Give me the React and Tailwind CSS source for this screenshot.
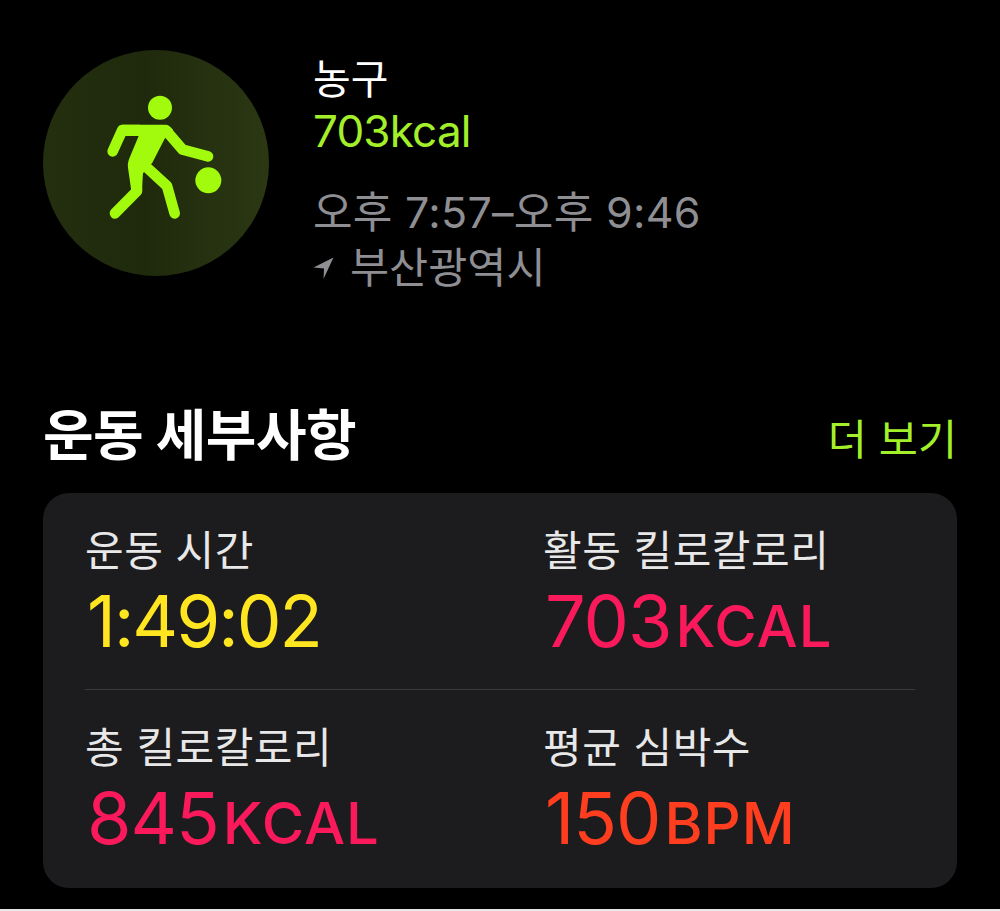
const KR = { fontFamily: '"Inter","Noto Sans CJK KR",sans-serif' };

function Player() {
  return (
    <svg viewBox="40 32 678 678" className="w-[226px] h-[226px] shrink-0" role="img" aria-label="농구">
      <defs>
        <linearGradient id="bg" x1="0" y1="0" x2="1" y2="0">
          <stop offset="0" stopColor="#242f10" />
          <stop offset="0.45" stopColor="#1f2a0c" />
          <stop offset="1" stopColor="#2b3813" />
        </linearGradient>
      </defs>
      <circle cx="379" cy="371" r="339" fill="url(#bg)" />
      <g fill="#a2fb0c">
        <circle cx="391" cy="205" r="36" />
        <circle cx="536" cy="423" r="39" />
        <path d="M276 256H400C412 256 422 261 430 271L405 298L368 370L340 402L337 445L305 455L295 385C293 372 297 362 301 352L327 290H276Z" />
      </g>
      <g fill="none" stroke="#a2fb0c" strokeWidth="32" strokeLinecap="round" strokeLinejoin="round">
        <path d="M249 336L278 272H330" />
        <path d="M408 272L459 331L535 351" />
        <path d="M320 385L322 455L256 522" />
        <path d="M352 385L412 440L435 522" />
      </g>
    </svg>
  );
}

function Arrow() {
  return (
    <svg viewBox="0 0 21 22" className="w-[21px] h-[22px] shrink-0" aria-hidden="true">
      <path d="M20.5 0.5L0.5 10.5L11 11.5L10.5 22Z" fill="#8e8e93" />
    </svg>
  );
}

function Stat({ label, value, unit, color }) {
  return (
    <div className="flex flex-col">
      <div className="text-[#e8e8e8] text-[42px] leading-[50px] tracking-[0.5px] whitespace-nowrap" style={KR}>{label}</div>
      {unit ? (
        <div className={`${color} pl-[2px] text-[72px] leading-[90px] font-normal tracking-[-1px] whitespace-nowrap`} style={KR}>
          {value}
          <span className="ml-[4px] text-[58px] font-medium tracking-[1px]">{unit}</span>
        </div>
      ) : (
        <div className={`${color} pl-[2px] text-[71px] leading-[90px] font-normal tracking-[-2px] whitespace-nowrap`} style={KR}>
          {value}
        </div>
      )}
    </div>
  );
}

export default function App() {
  return (
    <div className="w-[1000px] h-[911px] bg-black flex flex-col overflow-hidden" style={KR}>
      <div className="flex-1 px-[43px] pt-[50px] flex flex-col">
        <div className="flex items-start">
          <Player />
          <div className="ml-[44px] flex flex-col pt-[3px]">
            <div className="text-white text-[41px] leading-[52px]">농구</div>
            <div className="text-[#a3f02a] text-[44px] leading-[53px] tracking-[-0.8px]">703kcal</div>
            <div className="mt-[25px] text-[#8e8e93] text-[43px] leading-[58px] tracking-[0.3px] whitespace-nowrap">오후 7:57–오후 9:46</div>
            <div className="flex items-center gap-[16px] text-[#8e8e93] text-[42.5px] leading-[54px]">
              <Arrow />
              <span>부산광역시</span>
            </div>
          </div>
        </div>
        <div className="mt-[105px] flex items-end justify-between">
          <h2 className="text-white text-[55px] leading-[70px] font-bold tracking-[-0.5px]">운동 세부사항</h2>
          <span className="text-[#a3f02a] text-[42.5px] leading-[60px]">더 보기</span>
        </div>
        <div className="mt-[23px] bg-[#1c1c1e] rounded-[26px] h-[395px] px-[42px] flex flex-col">
          <div className="grid grid-cols-[458px_1fr] h-[197px] pt-[33px] border-b border-[#3a3a3c]">
            <Stat label="운동 시간" value="1:49:02" color="text-[#ffe620]" />
            <Stat label="활동 킬로칼로리" value="703" unit="KCAL" color="text-[#fa1a5c]" />
          </div>
          <div className="grid grid-cols-[458px_1fr] pt-[33px]">
            <Stat label="총 킬로칼로리" value="845" unit="KCAL" color="text-[#fa1a5c]" />
            <Stat label="평균 심박수" value="150" unit="BPM" color="text-[#ff3d1f]" />
          </div>
        </div>
      </div>
      <div className="h-[2px] bg-[#e8e8e8]" />
    </div>
  );
}
